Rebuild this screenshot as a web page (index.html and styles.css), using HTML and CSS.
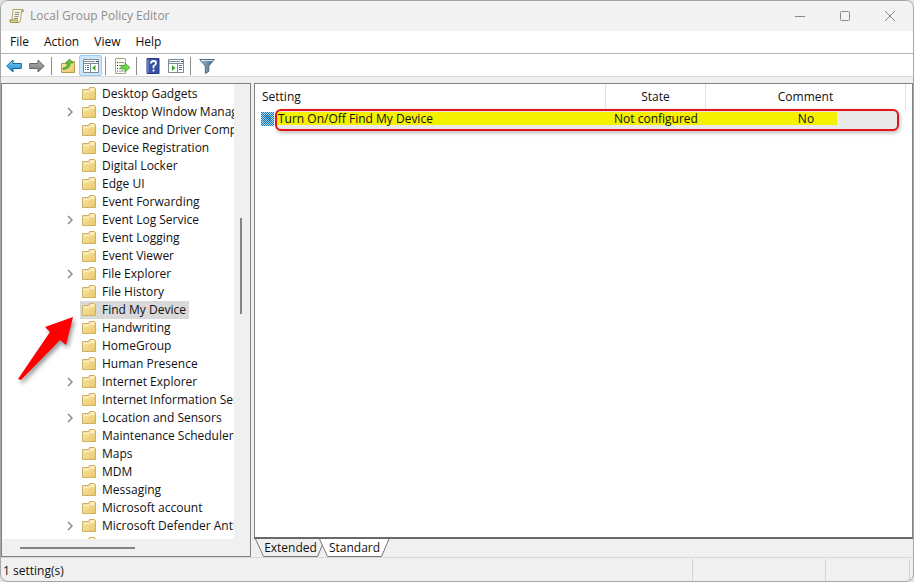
FILE: index.html
```html
<!DOCTYPE html>
<html lang="en">
<head>
<meta charset="utf-8">
<title>Local Group Policy Editor</title>
<link rel="stylesheet" href="styles.css">
</head>
<body>
<svg class="defs" aria-hidden="true">
  <defs>
    <linearGradient id="gold" x1="0" y1="0" x2="1" y2="1"><stop offset="0" stop-color="#fbe9ac"/><stop offset="1" stop-color="#e8c868"/></linearGradient>
    <linearGradient id="blue" x1="0" y1="0" x2="0" y2="1"><stop offset="0" stop-color="#7fd4f8"/><stop offset="1" stop-color="#1583cf"/></linearGradient>
    <linearGradient id="steel" x1="0" y1="0" x2="0" y2="1"><stop offset="0" stop-color="#b5b5b5"/><stop offset="1" stop-color="#777"/></linearGradient>
    <linearGradient id="funnel" x1="0" y1="0" x2="1" y2="0"><stop offset="0" stop-color="#a9c4d9"/><stop offset="1" stop-color="#3d5f7c"/></linearGradient>
  </defs>
  <symbol id="folder" viewBox="0 0 14 14">
    <path d="M.5 2.500h6l1-2h5l1 1v11H.5z" fill="url(#gold)" stroke="#cdb069"/>
    <path d="M8.500 2h3.500" stroke="#fff" fill="none"/>
    <path d="M1.500 4.500h6l1-1h4" stroke="#fdf2cb" fill="none"/>
  </symbol>
  <symbol id="chevron" viewBox="0 0 6 10"><path d="M1 1l4 4-4 4" fill="none" stroke="#8c8c8c" stroke-width="1.500"/></symbol>
</svg>

<div class="window">
  <header class="titlebar">
    <svg class="app-icon" width="16" height="16" viewBox="0 0 16 16">
      <path d="M4 1.500h9q2 0 1.500 2h-2l-1 9q0 2-2 2H2q-1.500-.5-1-2.500h2z" fill="#fbf8df" stroke="#a9a56e"/>
      <path d="M1 12h7.500q-.5 2.500 1 2.500H2.500Q.5 14.500 1 12z" fill="#d9d48e" stroke="#9a965a"/>
      <path d="M12.500 3.500V2q.5-1 1.500-.3.700.8.400 1.800z" fill="#d9d48e" stroke="#9a965a" stroke-width=".7"/>
      <path d="M6 4.500h4.500M5.500 6.500H10M5.500 8.500h4M5 10.500h4" stroke="#888" fill="none"/>
    </svg>
    <h1>Local Group Policy Editor</h1>
    <button class="caption" aria-label="Minimize"><svg width="12" height="12" viewBox="0 0 12 12"><path d="M1 6.500h10"/></svg></button>
    <button class="caption" aria-label="Maximize"><svg width="12" height="12" viewBox="0 0 12 12"><rect x="1.500" y="1.500" width="9" height="9" rx="1"/></svg></button>
    <button class="caption" aria-label="Close"><svg width="12" height="12" viewBox="0 0 12 12"><path d="M1 1l10 10M11 1L1 11"/></svg></button>
  </header>

  <nav class="menubar">
    <button>File</button><button>Action</button><button>View</button><button>Help</button>
  </nav>

  <div class="toolbar">
    <button aria-label="Back"><svg width="16" height="16" viewBox="0 0 16 16"><path d="M.7 8L7 2v3.500h8.300v5H7V14z" fill="url(#blue)" stroke="#1769a8"/></svg></button>
    <button aria-label="Forward"><svg width="16" height="16" viewBox="0 0 16 16"><path d="M15.300 8L9 2v3.500H.7v5H9V14z" fill="url(#steel)" stroke="#686868"/></svg></button>
    <span class="rule"></span>
    <button aria-label="Up one level"><svg width="16" height="16" viewBox="0 0 16 16"><path d="M1.500 5.500h6l1-2h6v11h-13z" fill="url(#gold)" stroke="#b99a4b"/><path d="M3 10q4 0 4.500-5H5.500L9.500 1l3.500 4h-2.500Q10 11 3 11.500z" fill="#5cc237" stroke="#338a20" stroke-width=".7"/></svg></button>
    <button class="pressed" aria-label="Show or hide console tree" aria-pressed="true"><svg width="16" height="16" viewBox="0 0 16 16"><path d="M.5 1.500h15v13H.5z" fill="#fff" stroke="#7b8896"/><path d="M1 3.500h11M1 5.500h14M7.500 6v8" stroke="#7b8896" fill="none"/><path d="M13 3.500h2" stroke="#345"/><path d="M2 7.500h4M2 9.500h4M2 11.500h4" stroke="#4977ad" stroke-dasharray="1 1 2"/><path d="M12.500 7v6L9 10z" fill="#45a92d"/></svg></button>
    <span class="rule"></span>
    <button aria-label="Export list"><svg width="16" height="16" viewBox="0 0 16 16"><path d="M1.500.5h10v15h-10z" fill="#fffef0" stroke="#a9a58c"/><path d="M3 4.500h1M3 7.500h1M3 10.500h1M3 13h1" stroke="#333"/><path d="M5 4.500h5M5 7.500h5M5 10.500h5M5 13h5" stroke="#8895aa"/><path d="M7 7.500h4V5l5 4.500-5 4.500v-3H7z" fill="#6dd849" stroke="#37982a" stroke-width=".7"/></svg></button>
    <span class="rule"></span>
    <button aria-label="Help"><svg width="16" height="16" viewBox="0 0 16 16"><path d="M2 .5h12v15H2z" fill="#3553a7" stroke="#26397c"/><path d="M3 1v14" stroke="#8ba2df"/><path d="M6 5.500q0-2.500 2.500-2.500T11 5.300Q11 7 8.500 8v2.300M8.500 11.500v2" fill="none" stroke="#fff" stroke-width="1.800"/></svg></button>
    <button aria-label="Show or hide action pane"><svg width="16" height="16" viewBox="0 0 16 16"><path d="M.5 1.500h15v13H.5z" fill="#fff" stroke="#7b8896"/><path d="M1 3.500h11M1 5.500h14M9.500 6v8" stroke="#7b8896" fill="none"/><path d="M13 3.500h2" stroke="#345"/><path d="M11 7.500h3M11 9.500h3M11 11.500h3" stroke="#4977ad"/><path d="M4 7v6l3.500-3z" fill="#45a92d"/></svg></button>
    <span class="rule"></span>
    <button aria-label="Filter"><svg width="16" height="16" viewBox="0 0 16 16"><path d="M.7 1.500h14.600L9.800 8v5.500l-3.500 2V8z" fill="url(#funnel)" stroke="#506b80"/><path d="M2 2.500h12" stroke="#d9e7f0"/></svg></button>
  </div>

  <main class="panes">
    <section class="tree-pane" aria-label="Console tree">
      <ul class="tree">
        <li><svg class="folder"><use href="#folder"/></svg><button class="node">Desktop Gadgets</button></li>
        <li><button class="expander" aria-label="Expand Desktop Window Manager"><svg><use href="#chevron"/></svg></button><svg class="folder"><use href="#folder"/></svg><button class="node">Desktop Window Manager</button></li>
        <li><svg class="folder"><use href="#folder"/></svg><button class="node">Device and Driver Compatibility</button></li>
        <li><svg class="folder"><use href="#folder"/></svg><button class="node">Device Registration</button></li>
        <li><svg class="folder"><use href="#folder"/></svg><button class="node">Digital Locker</button></li>
        <li><svg class="folder"><use href="#folder"/></svg><button class="node">Edge UI</button></li>
        <li><svg class="folder"><use href="#folder"/></svg><button class="node">Event Forwarding</button></li>
        <li><button class="expander" aria-label="Expand Event Log Service"><svg><use href="#chevron"/></svg></button><svg class="folder"><use href="#folder"/></svg><button class="node">Event Log Service</button></li>
        <li><svg class="folder"><use href="#folder"/></svg><button class="node">Event Logging</button></li>
        <li><svg class="folder"><use href="#folder"/></svg><button class="node">Event Viewer</button></li>
        <li><button class="expander" aria-label="Expand File Explorer"><svg><use href="#chevron"/></svg></button><svg class="folder"><use href="#folder"/></svg><button class="node">File Explorer</button></li>
        <li><svg class="folder"><use href="#folder"/></svg><button class="node">File History</button></li>
        <li class="selected"><svg class="folder"><use href="#folder"/></svg><button class="node">Find My Device</button></li>
        <li><svg class="folder"><use href="#folder"/></svg><button class="node">Handwriting</button></li>
        <li><svg class="folder"><use href="#folder"/></svg><button class="node">HomeGroup</button></li>
        <li><svg class="folder"><use href="#folder"/></svg><button class="node">Human Presence</button></li>
        <li><button class="expander" aria-label="Expand Internet Explorer"><svg><use href="#chevron"/></svg></button><svg class="folder"><use href="#folder"/></svg><button class="node">Internet Explorer</button></li>
        <li><svg class="folder"><use href="#folder"/></svg><button class="node">Internet Information Services</button></li>
        <li><button class="expander" aria-label="Expand Location and Sensors"><svg><use href="#chevron"/></svg></button><svg class="folder"><use href="#folder"/></svg><button class="node">Location and Sensors</button></li>
        <li><svg class="folder"><use href="#folder"/></svg><button class="node">Maintenance Scheduler</button></li>
        <li><svg class="folder"><use href="#folder"/></svg><button class="node">Maps</button></li>
        <li><svg class="folder"><use href="#folder"/></svg><button class="node">MDM</button></li>
        <li><svg class="folder"><use href="#folder"/></svg><button class="node">Messaging</button></li>
        <li><svg class="folder"><use href="#folder"/></svg><button class="node">Microsoft account</button></li>
        <li><button class="expander" aria-label="Expand Microsoft Defender Antivirus"><svg><use href="#chevron"/></svg></button><svg class="folder"><use href="#folder"/></svg><button class="node">Microsoft Defender Antivirus</button></li>
        <li><svg class="folder"><use href="#folder"/></svg></li>
      </ul>
      <div class="vscroll"><span class="thumb"></span></div>
      <div class="hscroll"><span class="thumb"></span></div>
      <svg class="pointer" width="64" height="72" viewBox="0 0 64 72" aria-hidden="true"><path d="M56 3L49 31l-6-5L4 66l-3-1 32-47-5-5z" fill="#fe0000"/></svg>
    </section>

    <section class="detail-pane" aria-label="Settings">
      <div class="list">
        <table>
          <colgroup><col><col class="col-state"><col class="col-comment"></colgroup>
          <thead><tr><th scope="col">Setting</th><th scope="col">State</th><th scope="col">Comment</th></tr></thead>
          <tbody>
            <tr>
              <td><div class="name"><svg class="policy" width="13" height="14" viewBox="0 0 13 14"><defs><pattern id="check" width="2" height="2" patternUnits="userSpaceOnUse"><path d="M0 0h1v1H0zM1 1h1v1H1z" fill="#0878c0"/></pattern></defs><path d="M0 0h13v14H0z" fill="#b9dcee"/><path d="M3 3h7v8H3z" fill="#9dc3d6"/><path d="M4 4h3v2h2v3" stroke="#2b6f98" fill="none"/><path d="M0 0h13v14H0z" fill="url(#check)"/></svg><span>Turn On/Off Find My Device</span></div></td>
              <td>Not configured</td>
              <td>No</td>
            </tr>
          </tbody>
        </table>
        <div class="callout" aria-hidden="true"></div>
      </div>
      <div class="tabs" role="tablist">
        <button role="tab" aria-selected="false"><svg width="71" height="18" viewBox="0 0 71 18"><path d="M.5 0l8 17.500h54L70 0" fill="#f0f0f0" stroke="#777"/></svg><span>Extended</span></button>
        <button role="tab" aria-selected="true"><svg width="71" height="18" viewBox="0 0 71 18"><path d="M.5 0l8 17.500h54L70 0" fill="#fff" stroke="#777"/></svg><span>Standard</span></button>
      </div>
    </section>
  </main>

  <footer class="status"><span>1 setting(s)</span><span></span><span></span></footer>
</div>
</body>
</html>
```

FILE: styles.css
```css
* { box-sizing: border-box; }

body {
  margin: 0;
  background: #e2e2e2;
  color: #111;
  font: 12px/18px "Open Sans", "Noto Sans", sans-serif;
}

button {
  padding: 0;
  border: 0;
  background: none;
  color: inherit;
  font: inherit;
}

.defs { position: absolute; width: 0; height: 0; }

.window {
  display: flex;
  flex-direction: column;
  height: 100vh;
  overflow: hidden;
  border: 1px solid #a6a6a6;
  border-radius: 8px;
  background: #f0f0f0;
}

.titlebar {
  display: flex;
  align-items: center;
  height: 30px;
  padding: 0 1px 0 8px;
  background: #f3f3f3;
}
.titlebar h1 {
  flex: 1;
  margin: 0 0 0 5px;
  color: #8e8e8e;
  font-size: 12px;
  font-weight: 400;
}
.caption {
  display: grid;
  place-items: center;
  width: 45px;
  height: 30px;
}
.caption svg { fill: none; stroke: #8a8a8a; }

.menubar {
  display: flex;
  height: 23px;
  padding: 0 2px;
  border-bottom: 1px solid #b4b4b4;
  background: #fff;
}
.menubar button { padding: 0 8px 0 7px; }

.toolbar {
  display: flex;
  align-items: center;
  height: 23px;
  padding: 1px 0 0 1px;
  border-bottom: 1px solid #d8d8d8;
  background: #fff;
}
.toolbar button {
  display: grid;
  place-items: center;
  width: 23px;
  height: 21px;
}
.toolbar .pressed {
  border: 1px solid #9ccdf5;
  border-radius: 2px;
  background: #cce6fb;
}
.rule {
  width: 1px;
  height: 18px;
  margin: 0 4px 0 3px;
  background: #8d8d8d;
}

.panes {
  display: grid;
  grid-template-columns: 250px minmax(0, 1fr);
  grid-template-rows: minmax(0, 1fr);
  flex: 1;
  gap: 3px;
  min-height: 0;
  padding-top: 6px;
}

.tree-pane {
  position: relative;
  display: grid;
  grid-template: minmax(0, 1fr) 17px / minmax(0, 1fr) 16px;
  border: 1px solid #828282;
  background: #f0f0f0;
}
.tree {
  overflow: hidden;
  margin: 0;
  padding: 1px 0 0;
  background: #fff;
  list-style: none;
}
.tree li {
  display: flex;
  align-items: center;
  height: 18px;
  padding-left: 80px;
}
.tree li:has(.expander) { padding-left: 65px; }
.expander {
  flex: none;
  width: 15px;
  height: 10px;
}
.expander svg { display: block; width: 6px; height: 10px; }
.folder { flex: none; width: 14px; height: 14px; }
.node {
  padding: 0 3px 0 6px;
  white-space: nowrap;
}
.selected .folder { box-shadow: 0 0 0 2px #d9d9d9; background: #d9d9d9; }
.selected .node { background: #d9d9d9; }

.vscroll { padding: 134px 6px 0; }
.vscroll .thumb {
  display: block;
  width: 2px;
  height: 96px;
  background: #858585;
}
.hscroll { grid-column: 1 / -1; padding: 8px 18px; }
.hscroll .thumb {
  display: block;
  width: 115px;
  height: 2px;
  background: #858585;
}
.pointer {
  position: absolute;
  top: 230px;
  left: 15px;
  filter: drop-shadow(2px 3px 2px #0006);
}

.detail-pane { display: flex; flex-direction: column; }
.list {
  position: relative;
  flex: 1;
  min-height: 0;
  padding-right: 6px;
  border: 1px solid #828282;
  border-bottom: 2px solid #696969;
  background: #fff;
}
table {
  width: 100%;
  border-spacing: 0;
  table-layout: fixed;
}
.col-state { width: 100px; }
.col-comment { width: 200px; }
th {
  height: 26px;
  padding: 0;
  border-right: 1px solid #e2e2e2;
  font-weight: 400;
}
th:first-child { padding-left: 7px; text-align: left; }
td {
  position: relative;
  z-index: 1;
  height: 18px;
  padding: 0;
  text-align: center;
}
.name {
  display: flex;
  align-items: center;
  gap: 4px;
  padding-left: 6px;
}
.callout {
  position: absolute;
  top: 25px;
  right: 13px;
  left: 20px;
  height: 22px;
  border: 2px solid #e51414;
  border-radius: 6px;
  background:
    linear-gradient(90deg, #f3f000 calc(100% - 60px), transparent 0) 0 1px / 100% 13px no-repeat,
    #e9e9e9;
  box-shadow: 1px 2px 4px #0004;
}

.tabs {
  display: flex;
  height: 18px;
  padding-left: 1px;
}
.tabs button {
  position: relative;
  width: 71px;
  height: 18px;
}
.tabs button + button { margin-left: -7px; }
.tabs svg { position: absolute; top: 0; left: 0; }
.tabs span { position: relative; }

.status {
  display: grid;
  grid-template-columns: minmax(0, 1fr) 133px 84px;
  height: 24px;
  padding-right: 3px;
  border-top: 1px solid #d7d7d7;
}
.status span {
  margin-top: 1px;
  padding: 3px 2px 0;
  border-right: 1px solid #d3d3d3;
}
```
